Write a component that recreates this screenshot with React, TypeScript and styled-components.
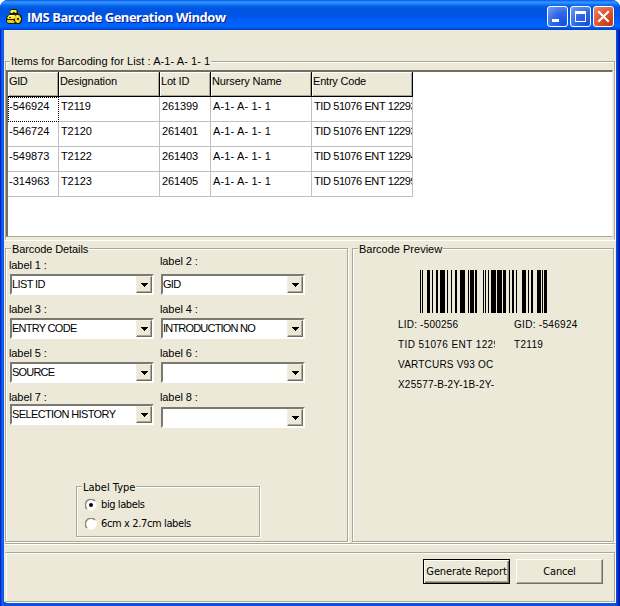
import React from "react";
import styled, { createGlobalStyle } from "styled-components";

const GlobalStyle = createGlobalStyle`
  * { box-sizing: border-box; }
  body { margin: 0; background: #fff; overflow: hidden; }
`;

const sans = `"Liberation Sans", Arial, sans-serif`;
const dialog = `"DejaVu Sans Condensed", "DejaVu Sans", Tahoma, sans-serif`;
const face = "#ece9d8";
const shade = "#aca899";

const Window = styled.div`
  width: 620px;
  height: 606px;
  display: flex;
  flex-direction: column;
  border-radius: 8px 8px 0 0;
  background: linear-gradient(90deg, #0019cf 0, #0831d9 1px, #166aee 2px, #0855dd 4px, #0855dd 616px, #0441d8 617px, #001dc5 619px, #00138c 620px);
  color: #000;
  font: 11px/14px ${sans};
  overflow: hidden;
`;

const TitleBar = styled.header`
  flex: 0 0 30px;
  display: flex;
  align-items: center;
  padding: 3px 6px 0 6px;
  background: linear-gradient(180deg, #0058e6 0, #3a93ff 2px, #288eff 3px, #0d6dee 5px, #0055e0 8px, #0054e3 14px, #005dfa 21px, #0066ff 25px, #0060f4 27px, #003fce 30px);
`;

const Title = styled.h1`
  flex: 1;
  margin: 0 0 0 4px;
  font: bold 13px/18px "Open Sans", "Trebuchet MS", sans-serif;
  letter-spacing: -0.49px;
  color: #fff;
  text-shadow: 1px 1px 0 #0a1883;
  white-space: nowrap;
`;

const Controls = styled.div`
  display: flex;
  gap: 2px;
`;

const ControlButton = styled.button<{ $close?: boolean }>`
  width: 21px;
  height: 21px;
  padding: 0;
  border: 1px solid #fff;
  border-radius: 3px;
  background: ${(p) =>
    p.$close
      ? "radial-gradient(circle at 85% 90%, #c63b14 0, #e0502c 50%, #ea8d72 100%)"
      : "radial-gradient(circle at 85% 90%, #1650e0 0, #2f68e8 50%, #7ba0f3 100%)"};
  svg { display: block; }
`;

const Body = styled.main`
  flex: 0 0 572px;
  margin: 0 4px;
  padding: 31px 1px 0 1px;
  background: ${face};
  display: flex;
  flex-direction: column;
`;

const etched = `
  border: 1px solid ${shade};
  box-shadow: 1px 1px 0 #fff, inset 1px 1px 0 #fff;
`;

const Legend = styled.div<{ $spacing?: number }>`
  width: fit-content;
  padding: 0 1px;
  background: ${face};
  letter-spacing: ${(p) => p.$spacing ?? 0}px;
  white-space: nowrap;
`;

const ItemsGroup = styled.section`
  flex: 0 0 179px;
  width: 610px;
  ${etched}
  border-bottom-color: ${face};
  ${Legend} { margin: -8px 0 0 4px; }
`;

const GridFrame = styled.div`
  width: 607px;
  height: 167px;
  margin-top: 2px;
  border: 2px solid;
  border-color: #716f64 #f1efe2 #f1efe2 #716f64;
  border-right-width: 1px;
  border-bottom: 1px solid ${shade};
  background: #fff;
`;

const Table = styled.div`
  display: grid;
  grid-template-columns: 51px 101px 51px 101px 101px;
  grid-auto-rows: 25px;
  width: 405px;
`;

const HeadCell = styled.div<{ $spacing?: number }>`
  padding: 2px 0 0 1px;
  border-right: 1px solid #000;
  border-bottom: 1px solid #000;
  background: ${face};
  box-shadow: inset 1px 1px 0 #fff, inset -1px -1px 0 ${shade};
  letter-spacing: ${(p) => p.$spacing ?? 0}px;
`;

const Cell = styled.div<{ $spacing?: number; $indent: number; $focus?: boolean }>`
  padding: ${(p) => (p.$focus ? "1px 0 0 0" : `2px 0 0 ${p.$indent}px`)};
  border-right: 1px solid #c0c0c0;
  border-bottom: 1px solid #c0c0c0;
  overflow: hidden;
  white-space: nowrap;
  letter-spacing: ${(p) => p.$spacing ?? 0}px;
  ${(p) => p.$focus && "border: 1px dotted #000;"}
`;

const Middle = styled.section`
  flex: 0 0 304px;
  width: 610px;
  display: flex;
  gap: 4px;
  padding-top: 7px;
  border-top: 1px solid #fff;
  border-bottom: 1px solid ${shade};
  box-shadow: 0 1px 0 #fff;
`;

const Group = styled.section<{ $width: number }>`
  width: ${(p) => p.$width}px;
  height: 294px;
  ${etched}
  & > ${Legend} { margin: -7px 0 0 5px; }
`;

const Fields = styled.div`
  display: grid;
  grid-template-columns: 151px 151px;
  grid-template-rows: 48px 44px 44px 44px;
  margin: -2px 0 0 3px;
`;

const Field = styled.div<{ $top: number }>`
  padding-top: ${(p) => p.$top}px;
  letter-spacing: -0.1px;
  white-space: pre;
`;

const Combo = styled.div<{ $gap: number }>`
  width: 144px;
  height: 21px;
  margin: ${(p) => p.$gap}px 0 0 1px;
  display: flex;
  border: 2px solid;
  border-color: #7c7a70 #fff #fff #7c7a70;
  background: #fff;
`;

const ComboValue = styled.span<{ $spacing: number }>`
  flex: 1;
  padding: 1px 0 0 0;
  line-height: 14px;
  letter-spacing: ${(p) => p.$spacing}px;
  white-space: nowrap;
`;

const ComboButton = styled.span`
  width: 16px;
  height: 17px;
  display: flex;
  align-items: center;
  justify-content: center;
  border: 1px solid;
  border-color: #f1efe2 #716f64 #716f64 #f1efe2;
  box-shadow: inset -1px -1px 0 ${shade};
  background: ${face};
`;

const RadioGroup = styled.div`
  width: 184px;
  height: 51px;
  margin: 52px 0 0 70px;
  font-family: ${dialog};
  font-stretch: condensed;
  ${etched}
  ${Legend} { margin: -6px 0 0 5px; }
`;

const RadioRow = styled.div<{ $spacing: number }>`
  display: flex;
  align-items: center;
  gap: 4px;
  height: 19px;
  padding-left: 8px;
  letter-spacing: ${(p) => p.$spacing}px;
  white-space: nowrap;
`;

const Preview = styled.div`
  padding: 14px 0 0 45px;
`;

const BarcodeArea = styled.div`
  padding-left: 22px;
  height: 48px;
  svg { display: block; }
`;

const PreviewGrid = styled.div`
  display: grid;
  grid-template-columns: 97px 80px;
  column-gap: 19px;
  grid-auto-rows: 20px;
`;

const PreviewText = styled.div<{ $spacing: number }>`
  font-size: 10px;
  line-height: 13px;
  letter-spacing: ${(p) => p.$spacing}px;
  overflow: hidden;
  white-space: nowrap;
`;

const Footer = styled.footer`
  flex: 0 0 50px;
  width: 610px;
  margin-top: 8px;
  padding: 6px 11px 0 0;
  display: flex;
  justify-content: flex-end;
  gap: 6px;
  ${etched}
  border-left-color: ${face};
`;

const PushButton = styled.button<{ $primary?: boolean; $spacing: number }>`
  width: 87px;
  height: 25px;
  padding: 0;
  border: 1px solid;
  border-color: ${(p) => (p.$primary ? "#000" : "#fff #716f64 #716f64 #fff")};
  background: ${face};
  box-shadow: ${(p) =>
    p.$primary
      ? "inset 1px 1px 0 #fff, inset -1px -1px 0 #716f64, inset -2px -2px 0 #aca899"
      : "inset -1px -1px 0 #aca899"};
  color: #000;
  font: 11px/14px ${dialog};
  font-stretch: condensed;
  letter-spacing: ${(p) => p.$spacing}px;
  white-space: nowrap;
`;

const AppIcon = () => (
  <svg width="17" height="16" viewBox="0 0 17 16">
    <path d="M4 1l2-1h4l2 2v3l3 1 1 3v3l-2 3H3l-3-2v-3l1-3 3-2z" fill="#1c1a00" />
    <path d="M5 1h5l1 2-1 1H5L4 3zM3 6h6l1 2-2 2H2L1 9z" fill="#ffee30" />
    <path d="M1 11h6l2 2-1 1H3l-2-1z" fill="#e8cc18" />
    <path d="M10 6h3l2 3v2l-2 3h-2l-2-2V9z" fill="#f0d820" />
    <path d="M6 1h2v1H6zM4 6h3v1H4zM11 7h1v1h-1z" fill="#fffcc8" />
    <path d="M11 9h2v2h-2zM3 8h2v1H3zM7 3h2v1H7z" fill="#3c3600" />
  </svg>
);

const Arrow = () => (
  <svg width="7" height="4" viewBox="0 0 7 4" shapeRendering="crispEdges">
    <path d="M0 0h7v1H0zM1 1h5v1H1zM2 2h3v1H2zM3 3h1v1H3z" />
  </svg>
);

const Radio = ({ checked }: { checked?: boolean }) => (
  <svg width="12" height="12" viewBox="0 0 12 12">
    <circle cx="6" cy="6" r="5.8" fill="#fff" />
    <path d="M2 10A5.4 5.4 0 0 1 10 2" fill="none" stroke="#85837a" strokeWidth="1.4" />
    {checked && <circle cx="6" cy="6" r="2" />}
  </svg>
);

/* [offset, width] of every dark bar */
const bars = [
  [0, 1], [2, 1], [7, 3], [12, 1], [16, 2], [20, 5], [27, 1], [31, 1], [35, 2], [40, 5],
  [48, 1], [50, 4], [55, 2], [63, 1], [65, 1], [68, 1], [71, 5], [77, 5], [83, 3], [89, 1],
  [92, 2], [96, 1], [102, 4], [108, 1], [111, 2], [117, 4], [122, 1], [124, 3],
];

const Barcode = () => (
  <svg width="127" height="43" viewBox="0 0 127 43" shapeRendering="crispEdges">
    {bars.map(([x, w]) => (
      <rect key={x} x={x} y="0" width={w} height="43" />
    ))}
  </svg>
);

const headers: [string, number][] = [
  ["GID", -0.4], ["Designation", -0.1], ["Lot ID", -0.2], ["Nursery Name", -0.12], ["Entry Code", -0.2],
];

const rows = [
  ["-546924", "T2119", "261399", "A-1- A- 1- 1", "TID 51076 ENT 12293"],
  ["-546724", "T2120", "261401", "A-1- A- 1- 1", "TID 51076 ENT 12293"],
  ["-549873", "T2122", "261403", "A-1- A- 1- 1", "TID 51076 ENT 12294"],
  ["-314963", "T2123", "261405", "A-1- A- 1- 1", "TID 51076 ENT 12299"],
];
const columns = [
  { spacing: 0, indent: 1 },
  { spacing: -0.1, indent: 2 },
  { spacing: -0.1, indent: 2 },
  { spacing: 0.15, indent: 2 },
  { spacing: -0.4, indent: 2 },
];

const fields = [
  { label: "label 1 :", value: "LIST ID", top: 4, gap: 2, spacing: -0.6 },
  { label: "label 2 :", value: "GID", top: 0, gap: 6, spacing: -0.7 },
  { label: "label 3 :", value: "ENTRY CODE", top: 0, gap: 2, spacing: -0.72 },
  { label: "label 4 :", value: "INTRODUCTION NO", top: 0, gap: 2, spacing: -0.8 },
  { label: "label 5 :", value: "SOURCE", top: 0, gap: 2, spacing: -0.8 },
  { label: "label 6 :", value: "", top: 0, gap: 2, spacing: 0 },
  { label: "label 7 :", value: "SELECTION HISTORY", top: 0, gap: 0, spacing: -0.62 },
  { label: "label 8 :", value: "", top: 0, gap: 3, spacing: 0 },
];

export default function App() {
  return (
    <>
      <GlobalStyle />
      <Window>
        <TitleBar>
          <AppIcon />
          <Title>IMS Barcode Generation Window</Title>
          <Controls>
            <ControlButton aria-label="Minimize">
              <svg width="19" height="19"><path d="M4 12h7v3H4z" fill="#fff" /></svg>
            </ControlButton>
            <ControlButton aria-label="Maximize">
              <svg width="19" height="19"><path d="M4 4h11v11H4zM5 7v7h9V7z" fill="#fff" fillRule="evenodd" /></svg>
            </ControlButton>
            <ControlButton aria-label="Close" $close>
              <svg width="19" height="19"><path d="M5 5l9 9M14 5l-9 9" stroke="#fff" strokeWidth="2.2" strokeLinecap="square" /></svg>
            </ControlButton>
          </Controls>
        </TitleBar>
        <Body>
          <ItemsGroup>
            <Legend $spacing={0.07}>Items for Barcoding for List : A-1- A- 1- 1</Legend>
            <GridFrame>
              <Table>
                {headers.map(([name, spacing]) => (
                  <HeadCell key={name} $spacing={spacing}>{name}</HeadCell>
                ))}
                {rows.map((row, r) =>
                  row.map((value, c) => (
                    <Cell
                      key={`${r}-${c}`}
                      $spacing={columns[c].spacing}
                      $indent={columns[c].indent}
                      $focus={r === 0 && c === 0}
                    >
                      {value}
                    </Cell>
                  ))
                )}
              </Table>
            </GridFrame>
          </ItemsGroup>
          <Middle>
            <Group $width={343}>
              <Legend $spacing={-0.1}>Barcode Details</Legend>
              <Fields>
                {fields.map((f) => (
                  <Field key={f.label} $top={f.top}>
                    {f.label}
                    <Combo $gap={f.gap}>
                      <ComboValue $spacing={f.spacing}>{f.value}</ComboValue>
                      <ComboButton><Arrow /></ComboButton>
                    </Combo>
                  </Field>
                ))}
              </Fields>
              <RadioGroup>
                <Legend>Label Type</Legend>
                <RadioRow $spacing={-0.4}><Radio checked />big labels</RadioRow>
                <RadioRow $spacing={-0.37}><Radio />6cm x 2.7cm labels</RadioRow>
              </RadioGroup>
            </Group>
            <Group $width={262}>
              <Legend>Barcode Preview</Legend>
              <Preview>
                <BarcodeArea><Barcode /></BarcodeArea>
                <PreviewGrid>
                  <PreviewText $spacing={0.2}>LID: -500256</PreviewText>
                  <PreviewText $spacing={0.3}>GID: -546924</PreviewText>
                  <PreviewText $spacing={0.4}>TID 51076 ENT 12293</PreviewText>
                  <PreviewText $spacing={0.3}>T2119</PreviewText>
                  <PreviewText $spacing={0.2}>VARTCURS V93 OC</PreviewText>
                  <PreviewText $spacing={0.4} />
                  <PreviewText $spacing={0.2}>X25577-B-2Y-1B-2Y-</PreviewText>
                </PreviewGrid>
              </Preview>
            </Group>
          </Middle>
          <Footer>
            <PushButton $primary $spacing={-0.12}>Generate Report</PushButton>
            <PushButton $spacing={-0.2}>Cancel</PushButton>
          </Footer>
        </Body>
      </Window>
    </>
  );
}
